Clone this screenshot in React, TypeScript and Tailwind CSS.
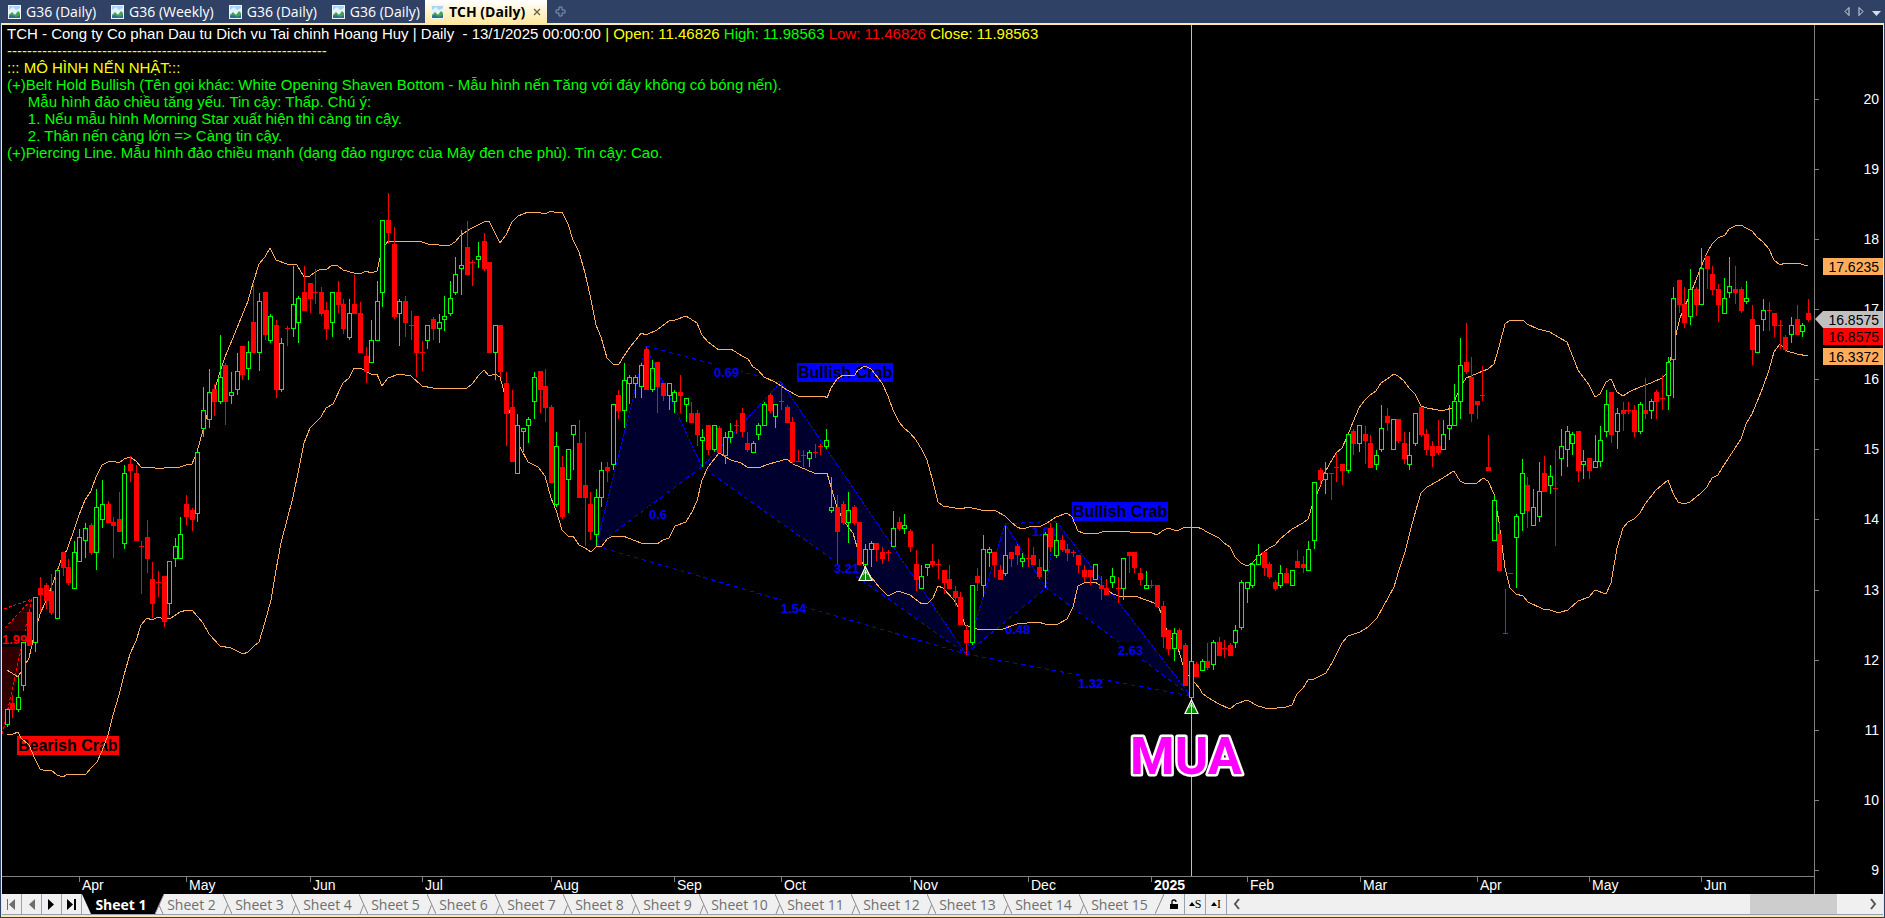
import { Plus } from "lucide-react";

// [x, high, body top, body bottom, low]
type Candle = [number, number, number, number, number];

const upCandles: Candle[] = [
  [7, 709, 709, 725, 727], [18, 677, 697, 710, 712], [23, 642, 642, 686, 691], [35, 597, 597, 643, 652],
  [57, 568, 570, 619, 619], [74, 541, 552, 589, 589], [79, 529, 537, 562, 562], [85, 523, 528, 541, 558],
  [96, 489, 507, 553, 570], [102, 480, 504, 520, 528], [124, 465, 473, 544, 549], [169, 561, 561, 604, 615],
  [175, 538, 546, 559, 567], [180, 517, 534, 559, 559], [197, 452, 452, 514, 522], [203, 387, 410, 429, 437],
  [209, 369, 392, 420, 428], [220, 335, 377, 402, 404], [231, 372, 392, 396, 404], [237, 353, 371, 390, 395],
  [248, 341, 352, 369, 380], [259, 293, 301, 353, 371], [270, 314, 316, 341, 343], [281, 338, 343, 390, 392],
  [293, 266, 304, 329, 337], [298, 296, 298, 323, 343], [332, 292, 292, 323, 337], [349, 299, 313, 338, 340],
  [371, 320, 340, 363, 363], [377, 281, 301, 341, 341], [382, 220, 220, 293, 307], [399, 299, 301, 314, 346],
  [427, 325, 325, 341, 349], [439, 314, 322, 329, 343], [444, 296, 316, 320, 331], [450, 281, 298, 314, 316],
  [455, 257, 274, 293, 295], [461, 230, 265, 269, 295], [478, 242, 256, 260, 268], [495, 325, 325, 353, 380],
  [517, 414, 425, 474, 474], [523, 428, 428, 432, 452], [528, 417, 419, 426, 443], [534, 372, 377, 402, 419],
  [556, 432, 446, 505, 507], [568, 449, 449, 480, 513], [573, 425, 425, 435, 470], [596, 489, 497, 535, 546],
  [601, 462, 470, 498, 507], [613, 404, 404, 465, 470], [624, 363, 380, 411, 428], [629, 375, 377, 384, 404],
  [635, 375, 377, 384, 398], [641, 363, 365, 387, 398], [652, 360, 368, 390, 392], [669, 383, 383, 396, 410],
  [674, 390, 392, 402, 413], [686, 398, 398, 405, 422], [702, 429, 437, 441, 467], [714, 425, 425, 450, 452],
  [725, 432, 437, 456, 464], [730, 423, 431, 438, 443], [753, 441, 443, 453, 453], [758, 423, 425, 435, 440],
  [764, 402, 404, 426, 426], [775, 404, 404, 417, 428], [809, 450, 452, 459, 467], [826, 429, 440, 447, 449],
  [831, 477, 507, 511, 513], [848, 492, 510, 523, 543], [865, 544, 549, 565, 567], [871, 541, 543, 550, 567],
  [893, 511, 528, 547, 547], [904, 514, 525, 529, 534], [921, 565, 576, 589, 589], [927, 564, 564, 568, 576],
  [972, 585, 585, 643, 645], [983, 535, 549, 586, 597], [989, 547, 549, 553, 567], [1005, 526, 555, 574, 576],
  [1022, 553, 558, 562, 567], [1045, 532, 534, 571, 588], [1056, 523, 540, 556, 558], [1095, 564, 564, 580, 580],
  [1112, 568, 576, 583, 588], [1123, 558, 558, 589, 600], [1146, 571, 585, 589, 589], [1174, 628, 633, 649, 661],
  [1191, 661, 661, 698, 698], [1202, 659, 661, 671, 671], [1213, 640, 642, 665, 670], [1235, 625, 630, 643, 648],
  [1241, 580, 582, 628, 630], [1247, 582, 582, 589, 603], [1252, 562, 564, 586, 588], [1258, 544, 555, 565, 565],
  [1280, 565, 573, 586, 588], [1292, 570, 570, 586, 586], [1308, 541, 549, 571, 571], [1314, 482, 482, 541, 549],
  [1325, 462, 473, 480, 494], [1348, 434, 434, 471, 473], [1359, 425, 425, 444, 452], [1376, 450, 455, 465, 470],
  [1381, 405, 428, 450, 452], [1393, 419, 419, 450, 450], [1409, 432, 455, 465, 470], [1415, 413, 413, 444, 446],
  [1443, 420, 434, 450, 450], [1449, 405, 425, 429, 440], [1454, 384, 401, 426, 426], [1460, 338, 365, 402, 419],
  [1494, 495, 500, 541, 541], [1516, 514, 516, 538, 588], [1522, 459, 473, 514, 531], [1533, 489, 507, 526, 526],
  [1539, 462, 491, 517, 522], [1550, 465, 476, 486, 494], [1561, 429, 446, 459, 476], [1567, 426, 431, 450, 467],
  [1572, 432, 434, 444, 455], [1583, 450, 461, 465, 479], [1595, 435, 461, 468, 468], [1600, 426, 440, 462, 467],
  [1606, 390, 404, 432, 437], [1617, 408, 413, 432, 449], [1640, 402, 404, 432, 434], [1651, 399, 401, 411, 419],
  [1668, 357, 362, 396, 410], [1673, 287, 298, 360, 398], [1690, 269, 289, 317, 325], [1701, 248, 268, 305, 305],
  [1724, 278, 298, 314, 314], [1729, 257, 286, 293, 298], [1746, 281, 298, 302, 304], [1757, 325, 325, 353, 353],
  [1763, 299, 310, 320, 331], [1791, 317, 325, 335, 343], [1802, 323, 325, 332, 337],
];

const downCandles: Candle[] = [
  [12, 695, 703, 710, 718], [29, 612, 612, 646, 646], [40, 577, 588, 595, 612], [46, 583, 585, 601, 609],
  [51, 574, 591, 613, 615], [63, 552, 552, 568, 576], [68, 559, 567, 583, 585], [91, 523, 525, 553, 555],
  [108, 501, 504, 523, 523], [113, 517, 522, 526, 558], [119, 492, 519, 532, 532], [130, 456, 464, 471, 482],
  [136, 465, 473, 541, 541], [141, 541, 546, 546, 594], [147, 520, 537, 559, 573], [152, 562, 579, 604, 618],
  [158, 571, 582, 582, 597], [164, 576, 576, 622, 627], [186, 495, 504, 517, 525], [192, 508, 510, 520, 531],
  [214, 384, 389, 402, 416], [225, 363, 365, 402, 425], [242, 346, 346, 375, 380], [253, 284, 322, 353, 353],
  [265, 292, 292, 335, 340], [276, 320, 325, 390, 398], [287, 326, 328, 328, 346], [304, 266, 292, 311, 311],
  [310, 283, 283, 299, 313], [315, 269, 292, 292, 304], [321, 287, 292, 314, 316], [326, 302, 310, 329, 340],
  [338, 281, 292, 305, 313], [343, 299, 304, 329, 334], [354, 275, 304, 314, 314], [360, 302, 313, 353, 353],
  [366, 347, 356, 372, 383], [388, 193, 220, 233, 244], [394, 227, 244, 317, 319], [405, 296, 301, 323, 337],
  [411, 311, 325, 325, 340], [416, 316, 316, 353, 377], [422, 341, 352, 352, 371], [433, 317, 319, 329, 340],
  [467, 221, 247, 275, 275], [472, 260, 262, 262, 286], [484, 233, 241, 269, 271], [489, 262, 262, 353, 353],
  [500, 325, 325, 372, 377], [506, 372, 383, 414, 446], [512, 390, 407, 462, 462], [540, 371, 371, 390, 413],
  [545, 369, 386, 408, 422], [551, 405, 407, 483, 483], [562, 456, 467, 517, 519], [579, 420, 443, 498, 498],
  [585, 432, 485, 498, 546], [590, 492, 504, 532, 540], [607, 462, 467, 471, 482], [618, 390, 395, 411, 419],
  [646, 347, 349, 390, 390], [657, 362, 362, 387, 413], [663, 383, 383, 396, 401], [680, 375, 392, 396, 413],
  [691, 402, 413, 423, 423], [697, 410, 413, 435, 446], [708, 425, 425, 450, 455], [719, 426, 428, 453, 453],
  [736, 420, 425, 425, 434], [742, 408, 413, 432, 437], [747, 432, 443, 450, 452], [770, 393, 395, 411, 413],
  [781, 384, 401, 401, 410], [787, 405, 407, 423, 423], [792, 417, 422, 462, 464], [798, 450, 461, 461, 462],
  [803, 450, 455, 455, 467], [815, 444, 452, 452, 458], [820, 444, 446, 446, 455], [837, 495, 507, 532, 564],
  [843, 501, 504, 523, 525], [854, 505, 507, 523, 525], [859, 522, 522, 565, 565], [876, 543, 543, 550, 561],
  [882, 547, 552, 559, 564], [888, 550, 552, 552, 561], [899, 517, 522, 529, 531], [910, 529, 531, 547, 552],
  [916, 550, 564, 580, 591], [932, 544, 561, 565, 567], [938, 559, 564, 564, 579], [944, 570, 570, 583, 594],
  [949, 565, 579, 589, 589], [955, 586, 591, 598, 606], [960, 592, 597, 625, 625], [966, 625, 630, 643, 655],
  [977, 568, 576, 583, 591], [994, 552, 552, 565, 577], [1000, 565, 570, 580, 580], [1011, 552, 552, 559, 567],
  [1017, 544, 546, 555, 565], [1028, 538, 558, 558, 567], [1033, 547, 555, 565, 565], [1039, 559, 567, 577, 579],
  [1050, 523, 528, 547, 552], [1062, 535, 540, 550, 552], [1067, 544, 549, 553, 561], [1073, 550, 552, 552, 557],
  [1078, 555, 555, 565, 573], [1084, 565, 570, 577, 582], [1090, 570, 570, 577, 585], [1101, 576, 585, 589, 600],
  [1106, 579, 588, 595, 595], [1118, 577, 588, 588, 603], [1129, 552, 552, 556, 573], [1134, 552, 552, 568, 573],
  [1140, 568, 573, 580, 585], [1151, 580, 585, 585, 588], [1157, 585, 585, 607, 607], [1163, 601, 606, 637, 648],
  [1168, 630, 630, 649, 655], [1179, 628, 630, 649, 649], [1185, 643, 645, 686, 686], [1196, 662, 664, 677, 677],
  [1207, 643, 661, 668, 670], [1219, 637, 642, 656, 656], [1224, 640, 648, 648, 658], [1230, 643, 645, 656, 656],
  [1264, 552, 552, 568, 576], [1269, 562, 564, 577, 579], [1275, 580, 582, 589, 591], [1286, 568, 573, 583, 583],
  [1297, 550, 561, 568, 568], [1303, 556, 564, 568, 573], [1320, 468, 470, 480, 485], [1331, 473, 473, 473, 500],
  [1336, 453, 467, 467, 482], [1342, 464, 464, 471, 485], [1353, 429, 431, 444, 455], [1365, 426, 434, 441, 464],
  [1370, 435, 443, 468, 468], [1387, 408, 416, 423, 431], [1398, 419, 419, 441, 443], [1404, 432, 443, 459, 464],
  [1421, 407, 407, 435, 437], [1426, 429, 434, 450, 455], [1432, 441, 446, 456, 467], [1438, 420, 446, 453, 455],
  [1466, 323, 362, 372, 374], [1471, 357, 377, 414, 422], [1477, 401, 401, 405, 419], [1482, 366, 395, 395, 401],
  [1488, 435, 467, 471, 471], [1499, 523, 534, 571, 571], [1505, 589, 633, 633, 634], [1510, 573, 573, 573, 573],
  [1527, 477, 485, 511, 528], [1544, 456, 473, 492, 492], [1555, 450, 488, 488, 546], [1578, 431, 431, 471, 482],
  [1589, 458, 458, 471, 479], [1611, 392, 392, 435, 443], [1623, 402, 410, 414, 431], [1628, 402, 410, 410, 414],
  [1634, 405, 410, 432, 437], [1645, 378, 410, 414, 419], [1656, 390, 392, 402, 419], [1662, 375, 398, 398, 410],
  [1679, 280, 280, 305, 313], [1684, 287, 304, 323, 328], [1696, 287, 289, 305, 316], [1707, 256, 256, 269, 289],
  [1712, 266, 274, 290, 295], [1718, 284, 289, 305, 322], [1735, 266, 289, 293, 304], [1741, 287, 289, 311, 313],
  [1752, 305, 319, 350, 365], [1769, 302, 310, 310, 331], [1774, 313, 313, 326, 337], [1780, 320, 325, 325, 349],
  [1785, 335, 337, 350, 352], [1797, 305, 319, 335, 335], [1808, 299, 313, 320, 322],
];

const upperBand =
  "7,670 18,677 29,658 33,640 40,614 46,601 51,588 57,572 61,560 67,550 74,530 79,515 85,500 91,491 96,477 102,465 108,462 113,461 119,463 124,459 130,457 136,461 141,467 147,468 152,467 158,469 164,468 180,467 186,465 192,464 197,452 203,430 209,408 214,392 220,372 225,357 237,328 248,301 253,283 259,264 265,257 270,248 276,260 287,264 297,265 304,277 310,276 315,272 321,269 326,270 332,265 338,266 343,270 354,273 360,274 366,271 371,273 377,271 380,258 383,248 388,241 407,241 422,242 428,244 439,245 444,246 450,245 455,242 461,235 467,231 472,228 484,222 489,221 500,243 506,235 512,222 518,216 528,212 537,212 545,214 551,211 557,213 562,212 568,224 573,240 579,252 585,273 590,295 596,325 601,337 607,358 613,364 619,364 624,356 630,347 636,340 641,333 646,335 657,330 669,321 675,320 686,316 697,323 702,335 708,342 719,350 731,349 742,356 748,359 753,367 758,370 764,377 775,382 787,390 798,396 824,396 827,398 831,388 837,379 843,375 855,375 858,370 865,366 871,369 882,383 888,396 893,410 899,422 904,428 910,433 916,440 922,450 927,460 932,478 938,502 943,506 961,509 968,507 981,510 996,511 1005,516 1011,522 1017,527 1022,529 1033,526 1039,527 1047,523 1056,517 1067,513 1072,517 1078,531 1083,533 1095,534 1106,531 1130,532 1152,533 1157,535 1162,531 1168,528 1174,530 1179,530 1185,527 1191,528 1197,527 1202,529 1207,532 1219,538 1224,543 1230,547 1235,557 1241,563 1247,566 1252,563 1258,557 1269,548 1275,545 1280,539 1286,534 1292,529 1303,523 1308,519 1314,500 1320,487 1325,472 1336,453 1342,448 1348,435 1353,422 1359,408 1365,400 1370,395 1376,391 1381,383 1387,379 1394,374 1398,376 1404,381 1409,388 1415,394 1421,406 1427,408 1438,410 1445,410 1452,408 1454,402 1460,388 1466,378 1471,376 1483,371 1488,369 1494,364 1499,347 1505,324 1510,320 1523,320 1527,324 1538,329 1550,332 1558,337 1567,342 1578,370 1589,385 1595,397 1600,394 1606,382 1611,379 1617,392 1623,396 1629,392 1640,387 1651,383 1662,378 1667,373 1672,353 1677,330 1680,318 1684,308 1690,295 1696,280 1701,267 1707,253 1712,244 1718,238 1725,235 1729,229 1735,226 1741,225 1746,228 1752,231 1757,237 1763,242 1769,249 1774,260 1780,265 1785,263 1797,263 1808,266";

const lowerBand =
  "7,734 13,734 18,732 21,738 29,745 35,759 40,769 46,771 51,770 57,775 63,777 68,774 86,774 91,768 97,762 102,751 108,735 113,715 119,695 124,675 130,654 136,641 141,625 147,618 152,620 158,617 164,619 171,618 180,612 187,610 192,610 203,623 209,634 220,646 231,648 243,654 248,652 254,646 259,642 265,622 271,600 276,570 281,543 293,497 298,473 304,443 310,428 321,417 326,408 333,404 343,383 349,378 354,368 360,368 371,374 377,374 382,386 388,378 399,374 411,376 422,386 433,388 467,388 472,384 479,375 484,370 489,376 495,374 500,377 503,388 509,410 520,447 528,462 538,467 545,476 551,498 556,510 562,530 568,536 573,536 579,545 585,548 591,552 596,547 602,546 607,539 613,536 623,536 641,543 657,544 663,540 669,538 675,526 686,522 692,512 697,501 702,480 708,467 719,453 731,460 741,463 747,467 758,468 769,464 787,459 793,464 814,473 827,473 831,487 837,507 843,520 853,533 857,547 862,562 865,568 871,577 880,588 888,596 898,591 910,595 922,604 928,603 933,598 938,586 943,588 954,600 960,610 965,625 977,629 1003,629 1017,624 1038,622 1045,624 1058,624 1067,619 1073,607 1078,586 1084,583 1095,582 1101,586 1113,594 1119,596 1135,596 1146,600 1157,604 1163,617 1167,632 1178,648 1183,665 1188,675 1195,683 1200,689 1202,693 1207,697 1219,704 1230,709 1236,704 1247,700 1258,706 1269,709 1286,707 1292,705 1297,694 1303,688 1308,680 1314,679 1326,673 1332,663 1337,653 1342,643 1348,636 1360,632 1368,627 1377,618 1383,607 1394,587 1399,570 1405,552 1411,528 1416,510 1421,493 1427,487 1438,481 1449,474 1454,471 1460,481 1466,484 1477,483 1483,478 1488,481 1494,494 1499,522 1505,568 1510,588 1516,594 1523,596 1528,602 1543,609 1550,610 1556,612 1561,612 1568,610 1578,601 1589,597 1595,590 1606,594 1611,583 1617,548 1623,528 1628,522 1634,519 1640,513 1645,504 1656,490 1668,480 1673,493 1678,502 1684,504 1690,502 1701,493 1707,487 1712,478 1718,475 1724,465 1741,439 1746,424 1752,414 1757,402 1763,387 1769,370 1774,352 1780,344 1787,351 1797,354 1808,356";

const months = [
  { x: 79, label: "Apr" },
  { x: 186, label: "May" },
  { x: 310, label: "Jun" },
  { x: 422, label: "Jul" },
  { x: 551, label: "Aug" },
  { x: 674, label: "Sep" },
  { x: 781, label: "Oct" },
  { x: 910, label: "Nov" },
  { x: 1028, label: "Dec" },
  { x: 1151, label: "2025" },
  { x: 1247, label: "Feb" },
  { x: 1360, label: "Mar" },
  { x: 1477, label: "Apr" },
  { x: 1589, label: "May" },
  { x: 1701, label: "Jun" },
];

const prices = [
  { y: 99, label: "20" },
  { y: 169, label: "19" },
  { y: 239, label: "18" },
  { y: 309, label: "17" },
  { y: 379, label: "16" },
  { y: 449, label: "15" },
  { y: 519, label: "14" },
  { y: 590, label: "13" },
  { y: 660, label: "12" },
  { y: 730, label: "11" },
  { y: 800, label: "10" },
  { y: 870, label: "9" },
];

const ratios = [
  { x: 714, y: 377, w: 28, label: "0.69" },
  { x: 649, y: 519, w: 19, label: "0.6" },
  { x: 834, y: 573, w: 26, label: "3.21" },
  { x: 781, y: 613, w: 26, label: "1.54" },
  { x: 1032, y: 536, w: 25, label: "1.01" },
  { x: 1005, y: 634, w: 0, label: "0.48" },
  { x: 1118, y: 655, w: 26, label: "2.63" },
  { x: 1078, y: 688, w: 26, label: "1.32" },
];

const documents = ["G36 (Daily)", "G36 (Weekly)", "G36 (Daily)", "G36 (Daily)"];
const sheets = Array.from({ length: 14 }, (_, i) => `Sheet ${i + 2}`);

function ChartIcon() {
  return (
    <svg width="13" height="14" viewBox="0 0 13 14" className="shrink-0">
      <rect width="13" height="14" fill="#eef5fa" />
      <rect x="1" y="1" width="11" height="12" fill="#a9d4f4" />
      <path d="M1 5 L5 2 L8 5 L12 3 V9 H1 Z" fill="#e6f3fc" />
      <path d="M1 10 L4 7 L7 10 L10 6 L12 8 V13 H1 Z" fill="#45a352" />
      <path d="M1 11 L4 10 L8 12 L12 10 V13 H1 Z" fill="#2a6f94" />
    </svg>
  );
}

function DocumentTabs() {
  return (
    <nav className="flex h-[23px] shrink-0 items-center bg-[#2f4266] pl-2 font-['Open_Sans','Noto_Sans',sans-serif] text-[14px] leading-[20px] text-white">
      {documents.map((name, i) => (
        <button key={i} className="mr-[15px] flex items-center gap-[5px] whitespace-nowrap">
          <ChartIcon />
          {name}
        </button>
      ))}
      <div className="-ml-2.5 flex h-full items-center gap-1 bg-linear-to-b from-white to-[#ffe8a0] px-1.5 text-black">
        <button className="flex items-center gap-[5px] whitespace-nowrap font-bold">
          <ChartIcon />
          TCH (Daily)
        </button>
        <button aria-label="Close" className="ml-1">
          <svg width="8" height="8" viewBox="0 0 8 8" stroke="#6b5f3c" strokeWidth="1.3">
            <path d="M1 1 L7 7 M7 1 L1 7" />
          </svg>
        </button>
      </div>
      <button aria-label="New tab" className="ml-2">
        <svg width="11" height="11" viewBox="0 0 11 11" fill="none" stroke="#8593b0">
          <path d="M4 1 H7 V4 H10 V7 H7 V10 H4 V7 H1 V4 H4 Z" />
        </svg>
      </button>
      <div className="ml-auto flex items-center gap-2 pr-1">
        <button aria-label="Previous">
          <svg width="6" height="9" viewBox="0 0 6 9" fill="none" stroke="#d5dceb">
            <path d="M5 0.5 V8.5 L1 4.5 Z" />
          </svg>
        </button>
        <button aria-label="Next">
          <svg width="6" height="9" viewBox="0 0 6 9" fill="none" stroke="#d5dceb">
            <path d="M1 0.5 V8.5 L5 4.5 Z" />
          </svg>
        </button>
        <button aria-label="Tab list" className="pt-1">
          <svg width="9" height="5" viewBox="0 0 9 5" fill="#d5dceb">
            <path d="M0 0 H9 L4.5 5 Z" />
          </svg>
        </button>
      </div>
    </nav>
  );
}

function BuyArrow({ x, y }: { x: number; y: number }) {
  return (
    <g transform={`translate(${x} ${y})`}>
      <path d="M0.5 0 L7 13.5 H-6 Z" fill="#008a00" stroke="#fff" strokeWidth="1.2" />
      <path d="M0.5 3 V13" stroke="#fff" />
      <path d="M-2 8 L0.5 4 L3 8" fill="none" stroke="#fff" strokeWidth="0.7" />
    </g>
  );
}

function Tag({ y, value, color }: { y: number; value: string; color: string }) {
  return (
    <g>
      <rect x="1823" y={y} width="60" height="17" fill={color} />
      <text x="1879" y={y + 14} textAnchor="end" fill="#000">{value}</text>
    </g>
  );
}

function PriceChart() {
  return (
    <svg
      viewBox="2 25 1881 869"
      className="block h-full w-full bg-black font-['Liberation_Sans',Arial,sans-serif] text-[14px]"
    >
      {/* harmonic patterns */}
      <g fill="#00002e">
        <polygon points="596,546 646,347 702,467" />
        <polygon points="702,467 781,382 966,654" />
        <polygon points="966,654 1005,524 1046,588" />
        <polygon points="1046,588 1056,521 1191,696" />
      </g>
      <polygon points="2,632 32,599 24,655 2,736" fill="#300000" />
      <g fill="none" stroke="#00f" strokeDasharray="4 4" shapeRendering="crispEdges">
        <path d="M646 346 L781 382 M596 546 L702 467 L966 654 M596 546 L966 654" />
        <path d="M1005 524 L1056 521 M966 654 L1046 588 L1191 696 M966 654 L1191 696" />
      </g>
      <g fill="none" stroke="#00f" strokeDasharray="3 1" shapeRendering="crispEdges">
        <path d="M596 546 L646 346 L702 467 L781 382 L966 654" />
        <path d="M966 654 L1005 524 L1046 588 L1056 521 L1191 696" />
      </g>
      <path
        d="M4 609 L32 599 M5 628 L32 599 L2 736"
        fill="none"
        stroke="#f00"
        strokeDasharray="3 2"
        shapeRendering="crispEdges"
      />
      <g className="text-[13px] font-bold">
        {ratios.map((r) => (
          <g key={r.label}>
            <rect x={r.x - 1} y={r.y - 13} width={r.w} height="16" fill="#000" />
            <text x={r.x} y={r.y} fill="#00f">{r.label}</text>
          </g>
        ))}
        <rect x="2" y="631" width="27" height="16" fill="#000" />
        <text x="2" y="644" fill="#f00">1.99</text>
      </g>
      <g className="text-[16px] font-bold">
        <rect x="797" y="363" width="96" height="19" fill="#00f" />
        <text x="798" y="378">Bullish Crab</text>
        <rect x="1072" y="502" width="96" height="19" fill="#00f" />
        <text x="1073" y="517">Bullish Crab</text>
        <rect x="17" y="736" width="102" height="19" fill="#f00" />
        <text x="18" y="751">Bearish Crab</text>
      </g>

      {/* bollinger bands */}
      <g fill="none" stroke="#ffad5b" shapeRendering="crispEdges">
        <polyline points={upperBand} />
        <polyline points={lowerBand} />
      </g>

      <rect x="1191" y="25" width="1" height="851" fill="#b4b4ff" />

      {/* candles */}
      <g fill="#0f0" shapeRendering="crispEdges">
        {upCandles.map(([x, high, top, bottom, low]) => (
          <g key={x}>
            <rect x={x} y={high} width="1" height={low - high} />
            <rect x={x - 2} y={top} width="5" height={bottom - top} />
            <rect x={x - 1} y={top + 1} width="3" height={bottom - top - 2} fill="#000" />
          </g>
        ))}
      </g>
      <g fill="#f00" shapeRendering="crispEdges">
        {downCandles.map(([x, high, top, bottom, low]) => (
          <g key={x}>
            <rect x={x} y={high} width="1" height={low - high} />
            <rect x={x - 2} y={top} width="5" height={Math.max(1, bottom - top)} />
          </g>
        ))}
      </g>

      <BuyArrow x={865} y={567} />
      <BuyArrow x={1191} y={700} />
      <text
        x="1130"
        y="774"
        className="font-[Roboto,sans-serif] text-[51px] font-bold"
        fill="#f0f"
        stroke="#fff"
        strokeWidth="5"
        strokeLinejoin="round"
        paintOrder="stroke"
      >
        MUA
      </text>

      {/* axes */}
      <g fill="#808080">
        <rect x="1814" y="25" width="1" height="869" />
        <rect x="2" y="876" width="1812" height="1" />
        {prices.map((p) => (
          <rect key={p.label} x="1815" y={p.y} width="4" height="1" />
        ))}
        {months.map((m) => (
          <rect key={m.x} x={m.x} y="877" width="1" height="5" />
        ))}
      </g>
      <g fill="#fff">
        {prices.map((p) => (
          <text key={p.label} x="1879" y={p.y + 5} textAnchor="end">{p.label}</text>
        ))}
        {months.map((m) => (
          <text key={m.x} x={m.x + 3} y="890" className={m.label === "2025" ? "font-bold" : ""}>
            {m.label}
          </text>
        ))}
      </g>

      <Tag y={258} value="17.6235" color="#ffad5b" />
      <path d="M1815 319 L1823 311 V328 Z" fill="#c0c0c0" />
      <Tag y={311} value="16.8575" color="#c0c0c0" />
      <Tag y={328} value="16.8575" color="#f00" />
      <Tag y={348} value="16.3372" color="#ffad5b" />
    </svg>
  );
}

function Commentary() {
  return (
    <div className="absolute top-0 left-[5px] whitespace-pre font-['Liberation_Sans',Arial,sans-serif] text-[15px] leading-[17px] text-[#0f0]">
      <p className="text-white">
        TCH - Cong ty Co phan Dau tu Dich vu Tai chinh Hoang Huy | Daily  - 13/1/2025 00:00:00{" "}
        <span className="text-[#ff0]">| Open: 11.46826 </span>
        <span className="text-[#0f0]">High: 11.98563 </span>
        <span className="text-[#f00]">Low: 11.46826 </span>
        <span className="text-[#ff0]">Close: 11.98563</span>
      </p>
      <p className="text-[#ff0]">----------------------------------------------------------------</p>
      <p className="text-[#ff0]">::: MÔ HÌNH NẾN NHẬT:::</p>
      <p>(+)Belt Hold Bullish (Tên gọi khác: White Opening Shaven Bottom - Mẫu hình nến Tăng với đáy không có bóng nến).</p>
      <p>{"     Mẫu hình đảo chiều tăng yếu. Tin cậy: Thấp. Chú ý:"}</p>
      <p>{"     1. Nếu mẫu hình Morning Star xuất hiện thì càng tin cậy."}</p>
      <p>{"     2. Thân nến càng lớn => Càng tin cậy."}</p>
      <p>(+)Piercing Line. Mẫu hình đảo chiều mạnh (dạng đảo ngược của Mây đen che phủ). Tin cậy: Cao.</p>
    </div>
  );
}

function SheetTabs() {
  return (
    <footer className="flex h-[21px] shrink-0 items-stretch border-b border-gray-400 bg-[#f0f0f0] font-['Open_Sans','Noto_Sans',sans-serif] text-[14px] leading-[19px] text-[#6e6e6e]">
      <button aria-label="First sheet" className="flex w-5 items-center justify-center border-r border-gray-400">
        <svg width="9" height="11" viewBox="0 0 9 11" fill="#6e6e6e">
          <path d="M0 0 H1 V11 H0 Z M8 0 V11 L2 5.5 Z" />
        </svg>
      </button>
      <button aria-label="Previous sheet" className="flex w-5 items-center justify-center border-r border-gray-400">
        <svg width="7" height="11" viewBox="0 0 7 11" fill="#6e6e6e">
          <path d="M7 0 V11 L1 5.5 Z" />
        </svg>
      </button>
      <button aria-label="Next sheet" className="flex w-5 items-center justify-center border-r border-gray-400">
        <svg width="7" height="11" viewBox="0 0 7 11" fill="#000">
          <path d="M0 0 V11 L6 5.5 Z" />
        </svg>
      </button>
      <button aria-label="Last sheet" className="flex w-5 items-center justify-center border-r border-gray-400">
        <svg width="9" height="11" viewBox="0 0 9 11" fill="#000">
          <path d="M0 0 V11 L6 5.5 Z M7 0 H9 V11 H7 Z" />
        </svg>
      </button>
      <svg width="9" height="20" viewBox="0 0 9 20" className="shrink-0">
        <path d="M0 0 H9 V20 Z" fill="#000" />
      </svg>
      <button className="w-[64px] bg-black pr-1 text-center font-bold whitespace-nowrap text-white">Sheet 1</button>
      <svg width="9" height="20" viewBox="0 0 9 20" className="shrink-0">
        <path d="M0 0 H9 L0 20 Z" fill="#000" />
        <path d="M9 0 L0 20 M4 11 L8 20" stroke="#8c8c8c" fill="none" />
      </svg>
      {sheets.map((name, i) => (
        <div key={name} className="flex">
          <button className={i < 8 ? "w-[59px] pr-1 whitespace-nowrap" : "w-[67px] pr-1 whitespace-nowrap"}>
            {name}
          </button>
          <svg width="9" height="20" viewBox="0 0 9 20" className="shrink-0" stroke="#8c8c8c" fill="none">
            {i < sheets.length - 1 ? <path d="M0 0 L9 20 M4.5 11 L1 20" /> : <path d="M9 0 L0 20" />}
          </svg>
        </div>
      ))}
      <button aria-label="Lock" className="flex w-[21px] items-center justify-center border-r border-gray-400">
        <svg width="8" height="10" viewBox="0 0 8 10">
          <path d="M2 5 V2.5 Q2 1 4 1 Q6 1 6 3" fill="none" stroke="#000" strokeWidth="1.3" />
          <path d="M0 5 H8 V10 H0 Z" fill="#000" />
        </svg>
      </button>
      {["S", "I"].map((letter) => (
        <button
          key={letter}
          className="flex w-[21px] items-center justify-center border-r border-gray-400 font-['Liberation_Serif',serif] text-[12px] text-black"
        >
          <svg width="6" height="4" viewBox="0 0 6 4" fill="#000">
            <path d="M0 4 L3 0 L6 4 Z" />
          </svg>
          {letter}
        </button>
      ))}
      <div className="flex flex-1 items-center px-1.5">
        <button aria-label="Scroll left">
          <svg width="8" height="12" viewBox="0 0 8 12" fill="none" stroke="#555" strokeWidth="2">
            <path d="M6 1 L2 6 L6 11" />
          </svg>
        </button>
        <div className="flex h-full flex-1 justify-end pr-8">
          <div className="h-full w-[87px] bg-[#cdcdcd]" />
        </div>
        <button aria-label="Scroll right">
          <svg width="8" height="12" viewBox="0 0 8 12" fill="none" stroke="#555" strokeWidth="2">
            <path d="M2 1 L6 6 L2 11" />
          </svg>
        </button>
      </div>
    </footer>
  );
}

export default function App() {
  return (
    <div className="flex h-screen flex-col overflow-hidden border-b border-[#2f4266] bg-[#2f4266]">
      <DocumentTabs />
      <div className="mx-px flex min-h-0 flex-1 flex-col border-x border-y-2 border-[#ffe8a6]">
        <main className="relative min-h-0 flex-1 bg-black">
          <PriceChart />
          <Commentary />
        </main>
        <SheetTabs />
      </div>
    </div>
  );
}
